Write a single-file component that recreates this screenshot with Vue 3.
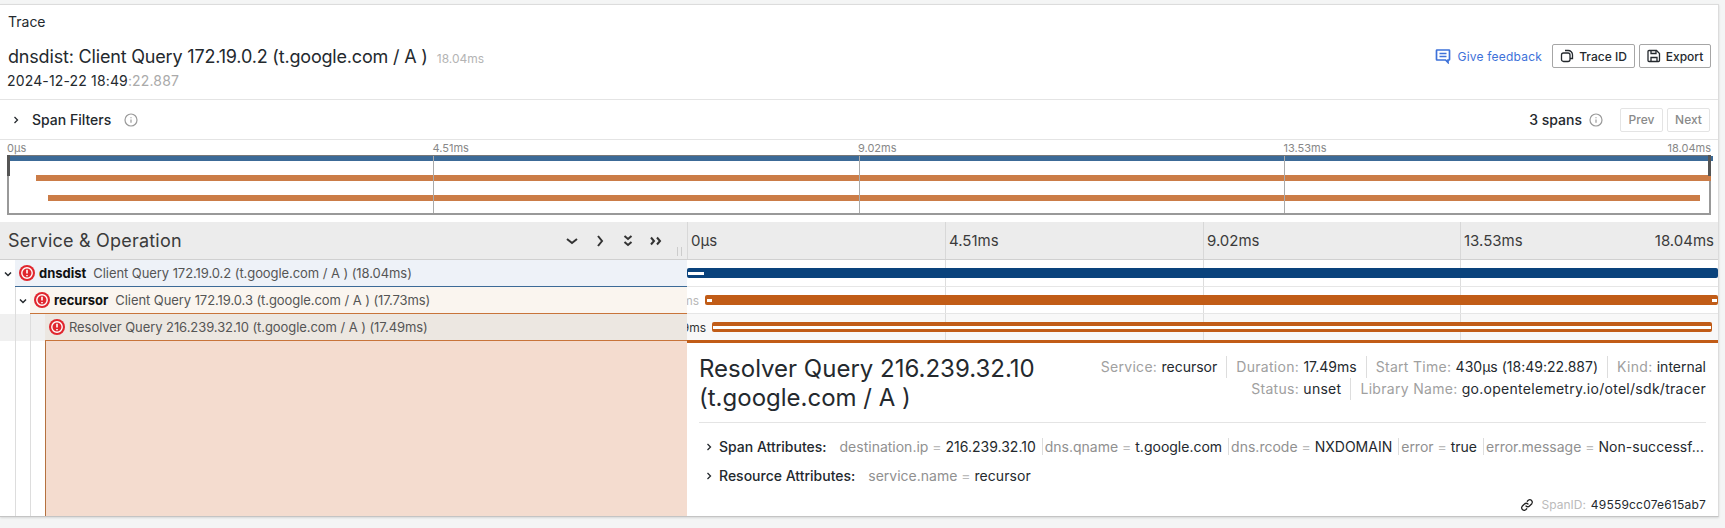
<template>
  <div class="page">
    <div class="panel">
      <div class="panel-title">Trace</div>
      <header class="trace-head">
        <div class="trace-info">
          <div class="trace-name">
            <span>dnsdist: Client Query 172.19.0.2 (t.google.com / A )</span>
            <small>18.04ms</small>
          </div>
          <div class="trace-date">2024-12-22 18:49<span>:22.887</span></div>
        </div>
        <a class="feedback">
          <svg width="16" height="16" viewBox="0 0 16 16" fill="none" stroke="#3d71d9" stroke-width="1.700">
            <path d="M2 2h12a.5.5 0 0 1 .5.5v9a.5.5 0 0 1-.5.5h-1v2.500L10.600 12H2a.5.5 0 0 1-.5-.5v-9A.5.5 0 0 1 2 2z" />
            <path d="M4.500 5.500h7M4.500 8.500h7" />
          </svg>
          Give feedback
        </a>
        <button class="btn trace-id">
          <svg width="14" height="14" viewBox="0 0 14 14" fill="none" stroke="#24292e" stroke-width="1.300">
            <path d="M5 1.500h3.200c2.300 0 4.300 2 4.300 4.300v3.700H10" />
            <rect x="1.500" y="4" width="8.500" height="8.500" rx="2" />
          </svg>
          Trace ID
        </button>
        <button class="btn export">
          <svg width="14" height="14" viewBox="0 0 14 14" fill="none" stroke="#24292e" stroke-width="1.300">
            <path d="M2 1.500h7.500l3 3v7a1 1 0 0 1-1 1h-9.500a1 1 0 0 1-1-1v-9a1 1 0 0 1 1-1z" />
            <path d="M4 1.500v3h5v-3M4 12.500V8.500h6v4" />
          </svg>
          Export
        </button>
      </header>

      <div class="filters">
        <svg class="chev" width="10" height="10" viewBox="0 0 10 10"><path d="M3.500 2l3 3-3 3" /></svg>
        <span class="filters-label">Span Filters</span>
        <svg class="info" width="14" height="14" viewBox="0 0 14 14" fill="none" stroke="#9a9a9a" stroke-width="1.200">
          <circle cx="7" cy="7" r="6" />
          <path d="M7 6.500v3.200M7 4.200v1" />
        </svg>
        <span class="spans-count">3 spans</span>
        <svg class="info" width="14" height="14" viewBox="0 0 14 14" fill="none" stroke="#9a9a9a" stroke-width="1.200">
          <circle cx="7" cy="7" r="6" />
          <path d="M7 6.500v3.200M7 4.200v1" />
        </svg>
        <button class="pager first">Prev</button>
        <button class="pager">Next</button>
      </div>

      <div class="minimap">
        <div class="mini-labels">
          <span v-for="label in ticks" :key="label" class="mini-col">{{ label }}</span>
          <span>13.53ms</span>
          <span class="mini-last">18.04ms</span>
        </div>
        <div class="mini-box">
          <i v-for="x in [424, 850, 1275]" :key="x" class="mini-tick" :style="{ left: x + 'px' }"></i>
          <i class="mini-bar" v-for="bar in miniBars" :key="bar.top"
            :style="{ top: bar.top + 'px', left: bar.left + 'px', width: bar.width + 'px', height: bar.height + 'px', background: bar.color }"></i>
          <i class="handle left"></i>
          <i class="handle right"></i>
        </div>
      </div>

      <div class="table-head">
        <div class="head-left">
          <span>Service &amp; Operation</span>
          <div class="head-tools">
            <svg width="16" height="16" viewBox="0 0 16 16"><path d="M3 6l5 4 5-4" /></svg>
            <svg width="16" height="16" viewBox="0 0 16 16"><path d="M6 3l4 5-4 5" /></svg>
            <svg width="16" height="16" viewBox="0 0 16 16"><path d="M4.500 3l3.500 3 3.500-3M4.500 9l3.500 3 3.500-3" /></svg>
            <svg width="16" height="16" viewBox="0 0 16 16"><path d="M3 4.500l3 3.500-3 3.500M9 4.500l3 3.500-3 3.500" /></svg>
          </div>
          <i class="grip"></i>
        </div>
        <div class="head-ticks">
          <span class="tick-a">0µs</span>
          <span class="tick-b">4.51ms</span>
          <span class="tick-c">9.02ms</span>
          <span class="tick-d"><span>13.53ms</span><span>18.04ms</span></span>
        </div>
      </div>

      <div v-for="row in rows" :key="row.op" class="row">
        <div class="row-left">
          <span v-for="n in row.depth" :key="n" class="guide" :class="{ shaded: row.active }">
            <svg v-if="n === row.depth && row.chevron" width="10" height="10" viewBox="0 0 10 10"><path d="M2 3.500l3 3 3-3" /></svg>
          </span>
          <div class="row-label" :style="{ background: row.bg, borderBottomColor: row.line }">
            <svg class="err" width="16" height="16" viewBox="0 0 16 16">
              <circle cx="8" cy="8" r="8" fill="#e0262e" />
              <circle cx="8" cy="8" r="5.200" fill="#e0262e" stroke="#fff" stroke-width="1.400" />
              <path d="M8 4.800v3.800M8 10v1.200" stroke="#fff" stroke-width="1.600" />
            </svg>
            <b v-if="row.service">{{ row.service }}</b>
            <span class="op">{{ row.op }}</span>
          </div>
        </div>
        <div class="row-bars" :class="{ shaded: row.active }">
          <span v-if="row.label" class="bar-label" :style="{ right: 1031 - row.left + 6 + 'px', color: row.labelColor }">{{ row.label }}</span>
          <div class="bar" :style="{ left: row.left + 'px', width: row.width + 'px', background: row.color }">
            <i v-for="mark in row.marks" :key="mark.left" class="mark"
              :style="{ left: mark.left + 'px', width: mark.width + 'px', height: mark.height + 'px' }"></i>
          </div>
        </div>
      </div>

      <div class="detail-row">
        <div class="detail-left">
          <span class="guide"></span>
          <span class="guide"></span>
          <span class="guide"></span>
          <div class="detail-fill"></div>
        </div>
        <div class="detail">
          <div class="detail-head">
            <h2>Resolver Query 216.239.32.10<br />(t.google.com / A )</h2>
            <div class="meta">
              <div class="meta-line">
                <span v-for="item in metaTop" :key="item[0]">{{ item[0] }}: <b>{{ item[1] }}</b></span>
              </div>
              <div class="meta-line wide">
                <span v-for="item in metaBottom" :key="item[0]">{{ item[0] }}: <b>{{ item[1] }}</b></span>
              </div>
            </div>
          </div>
          <div class="attrs">
            <svg class="chev" width="10" height="10" viewBox="0 0 10 10"><path d="M3.500 2l3 3-3 3" /></svg>
            <strong>Span Attributes:</strong>
            <div class="attr-list">
              <span v-for="attr in spanAttrs" :key="attr[0]">{{ attr[0] }} <em>=</em> <b>{{ attr[1] }}</b></span>
            </div>
          </div>
          <div class="attrs">
            <svg class="chev" width="10" height="10" viewBox="0 0 10 10"><path d="M3.500 2l3 3-3 3" /></svg>
            <strong>Resource Attributes:</strong>
            <div class="attr-list">
              <span>service.name <em>=</em> <b>recursor</b></span>
            </div>
          </div>
          <div class="span-id">
            <svg width="14" height="14" viewBox="0 0 14 14" fill="none" stroke="#222" stroke-width="1.300" stroke-linecap="round">
              <path d="M6 8a2.400 2.400 0 0 0 3.500 0l2.300-2.300a2.500 2.500 0 0 0-3.500-3.500L7.300 3.200" />
              <path d="M8 6a2.400 2.400 0 0 0-3.500 0L2.200 8.300a2.500 2.500 0 0 0 3.500 3.500l1-1" />
            </svg>
            <span>SpanID:</span> <b>49559cc07e615ab7</b>
          </div>
        </div>
      </div>
    </div>
  </div>
</template>

<script setup>
const ticks = ['0µs', '4.51ms', '9.02ms']

const miniBars = [
  { top: 0, left: 0, width: 1704, height: 5, color: '#3c6a97' },
  { top: 19, left: 27, width: 1675, height: 6, color: '#cb7c47' },
  { top: 39, left: 39, width: 1652, height: 6, color: '#cb7c47' }
]

const rows = [
  {
    depth: 1, chevron: true, service: 'dnsdist', op: 'Client Query 172.19.0.2 (t.google.com / A ) (18.04ms)',
    bg: '#eef2f8', line: '#3c6a97', left: 0, width: 1031, color: '#0a437c',
    marks: [{ left: 1, width: 16, height: 3 }]
  },
  {
    depth: 2, chevron: true, service: 'recursor', op: 'Client Query 172.19.0.3 (t.google.com / A ) (17.73ms)',
    bg: '#faf5ef', line: '#c8743a', left: 18, width: 1013, color: '#c15c17', label: '17.73ms', labelColor: '#b8b8b8',
    marks: [{ left: 2, width: 5, height: 3 }, { left: 1007, width: 5, height: 3 }]
  },
  {
    depth: 3, active: true, op: 'Resolver Query 216.239.32.10 (t.google.com / A ) (17.49ms)',
    bg: '#ece7e1', line: '#c8743a', left: 25, width: 1000, color: '#c15c17', label: '17.49ms', labelColor: '#333',
    marks: [{ left: 1, width: 998, height: 3 }]
  }
]

const metaTop = [['Service', 'recursor'], ['Duration', '17.49ms'], ['Start Time', '430µs (18:49:22.887)'], ['Kind', 'internal']]
const metaBottom = [['Status', 'unset'], ['Library Name', 'go.opentelemetry.io/otel/sdk/tracer']]

const spanAttrs = [
  ['destination.ip', '216.239.32.10'],
  ['dns.qname', 't.google.com'],
  ['dns.rcode', 'NXDOMAIN'],
  ['error', 'true'],
  ['error.message', 'Non-successf...']
]
</script>

<style>
body {
  margin: 0;
  background: #f4f5f5;
}
</style>

<style scoped>
.page {
  height: 528px;
  padding-top: 4px;
  box-sizing: border-box;
  overflow: hidden;
  font-family: Inter, "Liberation Sans", sans-serif;
  font-variant-ligatures: none;
  color: #24292e;
}
.panel {
  width: 1719px;
  box-sizing: border-box;
  height: 513px;
  background: #fff;
  border: 1px solid #dcdcdc;
  border-left: none;
  border-bottom: 1px solid #c4c4c4;
  box-shadow: 0 1px 2px rgba(0, 0, 0, 0.12);
}
.panel-title {
  height: 30px;
  padding: 9px 0 0 8px;
  box-sizing: border-box;
  font-size: 14px;
  line-height: 16px;
}
.trace-head {
  display: flex;
  align-items: flex-start;
  padding: 9px 7px 0 7px;
  height: 55px;
  border-bottom: 1px solid #e4e4e4;
}
.trace-info {
  flex: 1;
}
.trace-name {
  display: flex;
  align-items: baseline;
  gap: 9px;
  font-size: 18px;
  letter-spacing: -0.18px;
  line-height: 26px;
  padding-left: 1px;
}
.trace-name small {
  font-size: 12px;
  letter-spacing: 0;
  color: #b4b4b4;
}
.trace-date {
  font-size: 14px;
  letter-spacing: 0.15px;
  line-height: 18px;
}
.trace-date span {
  color: #aaa;
}
.feedback {
  display: flex;
  align-items: center;
  gap: 7px;
  height: 24px;
  margin-right: 10px;
  font-size: 12px;
  letter-spacing: 0.2px;
  color: #3d71d9;
}
.btn {
  display: flex;
  align-items: center;
  justify-content: center;
  gap: 5px;
  height: 24px;
  padding: 0;
  background: #fff;
  border: 1px solid #a6a6a6;
  border-radius: 2px;
  font: 500 12px Inter, sans-serif;
  color: #24292e;
}
.trace-id {
  width: 83px;
  margin-right: 4px;
}
.export {
  width: 72px;
}
.filters {
  display: flex;
  align-items: center;
  height: 40px;
  padding: 0 8px 0 0;
  border-bottom: 1px solid #e4e4e4;
  box-sizing: border-box;
}
.filters .chev {
  margin: 0 11px 0 11px;
}
.chev {
  flex: none;
}
.chev path {
  fill: none;
  stroke: #24292e;
  stroke-width: 1.300;
}
.filters-label {
  font-size: 14px;
  font-weight: 500;
  margin-right: 13px;
}
.spans-count {
  margin-left: auto;
  margin-right: 7px;
  font-size: 14px;
  font-weight: 500;
}
.pager {
  width: 43px;
  height: 24px;
  padding: 0;
  margin-left: 4px;
  background: #fff;
  border: 1px solid #e4e4e4;
  border-radius: 2px;
  font: 500 12px Inter, sans-serif;
  color: #8a8a8a;
}
.pager.first {
  margin-left: 17px;
}
.minimap {
  height: 82px;
  box-sizing: border-box;
  padding: 0 7px;
}
.mini-labels {
  display: flex;
  height: 15px;
  padding-top: 2px;
  box-sizing: border-box;
  font-size: 11px;
  line-height: 13px;
  color: #888;
}
.mini-col {
  flex: none;
  width: 425.5px;
}
.mini-last {
  margin-left: auto;
}
.mini-box {
  position: relative;
  height: 60px;
  box-sizing: border-box;
  border: 1px solid #999;
  border-top-color: #777;
  border-width: 1px 2px 2px;
}
.mini-tick {
  position: absolute;
  top: 0;
  bottom: 0;
  width: 1px;
  background: #aaa;
  z-index: 1;
}
.mini-bar {
  position: absolute;
}
.handle {
  position: absolute;
  top: -1px;
  width: 3px;
  height: 21px;
  background: #555;
  z-index: 2;
}
.handle.left {
  left: -2px;
}
.handle.right {
  right: -2px;
}
.table-head {
  display: flex;
  height: 37px;
  background: #ececec;
  border-bottom: 1px solid #d0d0d0;
}
.head-left {
  position: relative;
  display: flex;
  align-items: center;
  justify-content: space-between;
  width: 688px;
  padding: 0 23px 0 8px;
  box-sizing: border-box;
  font-size: 18px;
  letter-spacing: 0.2px;
  color: #3b3b3b;
  flex: none;
  border-right: 1px solid #d8d8d8;
}
.head-tools {
  display: flex;
  gap: 12px;
}
.head-tools path {
  fill: none;
  stroke: #333;
  stroke-width: 2;
}
.grip {
  position: absolute;
  right: 5px;
  bottom: 3px;
  width: 1px;
  height: 9px;
  border: solid #ccc;
  border-width: 0 1px;
  padding: 0 1px;
}
.head-ticks {
  flex: 1;
  display: flex;
  font-size: 15px;
  color: #3b3b3b;
  line-height: 37px;
}
.head-ticks > span {
  padding-left: 3px;
  box-sizing: border-box;
  border-left: 1px solid #d8d8d8;
}
.tick-a {
  width: 257px;
  border-left: none !important;
}
.tick-b {
  width: 258px;
}
.tick-c {
  width: 257px;
}
.tick-d {
  flex: 1;
  display: flex;
  justify-content: space-between;
  padding-right: 4px;
}
.row {
  display: flex;
  height: 27px;
}
.row-left {
  display: flex;
  width: 687px;
  flex: none;
}
.guide {
  display: flex;
  align-items: center;
  justify-content: center;
  flex: none;
  width: 15px;
  box-sizing: border-box;
}
.guide + .guide {
  border-left: 1px solid #ddd;
}
.guide.shaded {
  background: #f0f0f0;
}
.guide path {
  fill: none;
  stroke: #24292e;
  stroke-width: 1.500;
}
.row-label {
  flex: 1;
  display: flex;
  align-items: center;
  gap: 4px;
  padding-left: 4px;
  box-sizing: border-box;
  border-bottom: 1px solid;
  font-size: 13px;
  white-space: nowrap;
}
.row-label b {
  color: #111;
  margin-right: 3px;
}
.op {
  color: #555;
  letter-spacing: -0.07px;
}
.row-bars {
  position: relative;
  flex: 1;
  overflow: hidden;
  background-image: linear-gradient(#ddd, #ddd), linear-gradient(#ddd, #ddd), linear-gradient(#ddd, #ddd);
  background-size: 1px 100%;
  background-position: 258px 0, 516px 0, 773px 0;
  background-repeat: no-repeat;
  border-bottom: 1px solid #e6e6e6;
  box-sizing: border-box;
}
.row-bars.shaded {
  background-color: #f8f8f8;
  border-bottom: none;
}
.bar {
  position: absolute;
  top: 8px;
  height: 10px;
  border-radius: 2px;
}
.mark {
  position: absolute;
  top: 3.500px;
  background: #fff;
}
.bar-label {
  position: absolute;
  top: 6px;
  font-size: 12px;
  line-height: 16px;
  white-space: nowrap;
}
.detail-row {
  display: flex;
  height: 175px;
}
.detail-left {
  display: flex;
  width: 687px;
  flex: none;
}
.detail-fill {
  flex: 1;
  background: #f4dccf;
  border-left: 1px solid #b5713f;
}
.detail {
  position: relative;
  flex: 1;
  min-width: 0;
  border-top: 3px solid #c15c17;
  padding: 0 12px 0 12px;
  font-size: 14px;
  box-sizing: border-box;
  margin-top: -1px;
}
.detail-head {
  display: flex;
  justify-content: space-between;
  padding-top: 11px;
  height: 80px;
  box-sizing: border-box;
  border-bottom: 1px solid #e4e4e4;
}
.detail-head h2 {
  margin: 0;
  font-size: 24px;
  font-weight: 400;
  line-height: 29px;
  white-space: nowrap;
}
.meta {
  padding-top: 2px;
}
.meta-line {
  display: flex;
  justify-content: flex-end;
  height: 22px;
  align-items: center;
}
.meta-line span {
  color: #a0a0a0;
  letter-spacing: 0.3px;
  padding: 0 0 0 9px;
  margin-left: 9px;
  border-left: 1px solid #ddd;
  line-height: 22px;
}
.meta-line span:first-child {
  border-left: none;
}
.meta-line b,
.attr-list b {
  font-weight: 400;
  letter-spacing: 0;
  color: #24292e;
}
.meta-line.wide b {
  letter-spacing: 0.28px;
}
.attrs {
  display: flex;
  align-items: center;
  height: 29px;
  white-space: nowrap;
}
.attrs:nth-of-type(2) {
  margin-top: 9px;
}
.attrs .chev {
  margin: 0 5px;
}
.attrs strong {
  flex: none;
  font-weight: 500;
  margin-right: 11px;
}
.attr-list {
  display: flex;
  flex: none;
  color: #909090;
  font-size: 14px;
}
.attr-list span {
  padding: 0 6px 0 2px;
  border-left: 1px solid #ddd;
}
.attr-list span:first-child {
  border-left: none;
}
.attr-list span:last-child b {
  letter-spacing: 0.05px;
}
.attr-list em {
  font-style: normal;
  color: #bbb;
}
.span-id {
  position: absolute;
  right: 12px;
  bottom: 4px;
  display: flex;
  align-items: center;
  gap: 5px;
  font-size: 12px;
  color: #bbb;
}
.span-id svg {
  margin-right: 3px;
}
.span-id b {
  font-weight: 400;
  letter-spacing: 0.2px;
  color: #24292e;
}
</style>
